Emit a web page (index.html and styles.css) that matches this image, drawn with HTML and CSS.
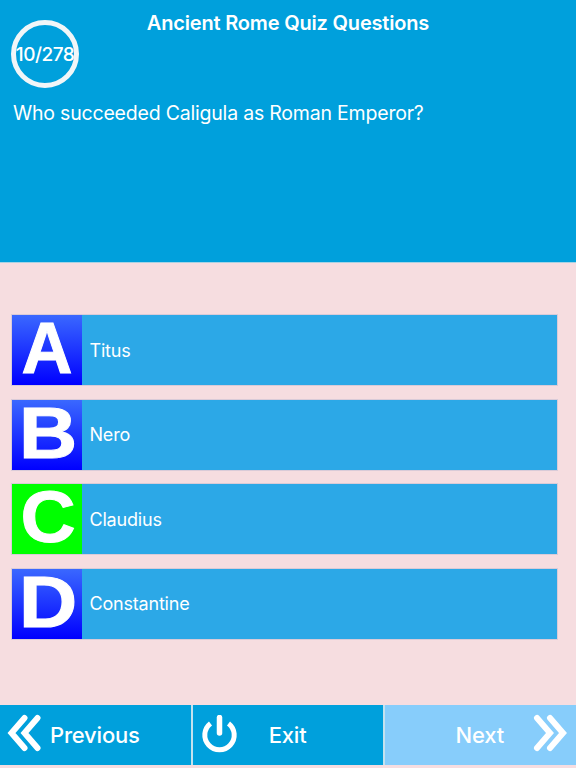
FILE: index.html
```html
<!DOCTYPE html>
<html lang="en">
<head>
<meta charset="utf-8">
<title>Ancient Rome Quiz Questions</title>
<link rel="stylesheet" href="styles.css">
</head>
<body>
<div class="app">
  <header class="top">
    <div class="top-grid">
      <h1 class="title">Ancient Rome Quiz Questions</h1>
      <div class="counter">10/278</div>
    </div>
    <p class="question">Who succeeded Caligula as Roman Emperor?</p>
  </header>
  <main class="answers">
    <div class="answer"><span class="letter"><span class="glyph glyph-a">A</span></span><span class="text">Titus</span></div>
    <div class="answer"><span class="letter"><span class="glyph glyph-b">B</span></span><span class="text">Nero</span></div>
    <div class="answer"><span class="letter correct"><span class="glyph glyph-c">C</span></span><span class="text">Claudius</span></div>
    <div class="answer"><span class="letter"><span class="glyph glyph-d">D</span></span><span class="text">Constantine</span></div>
  </main>
  <nav class="nav">
    <div class="btn btn-prev">
      <svg class="icon-chev" viewBox="0 0 40 40" aria-hidden="true"><path d="M19.5 5 6.5 20l13 15M32.5 5 19.5 20l13 15"/></svg>
      <span class="btn-label">Previous</span>
    </div>
    <div class="btn btn-exit">
      <svg class="icon-power" viewBox="0 0 37 40" aria-hidden="true"><path class="arc" d="M9.5 8.4A14.7 14.7 0 1 0 27.5 8.4"/><path class="bar" d="M18.5 2.5V18"/></svg>
      <span class="btn-label">Exit</span>
    </div>
    <div class="btn btn-next">
      <span class="btn-label">Next</span>
      <svg class="icon-chev" viewBox="0 0 40 40" aria-hidden="true"><path d="M6 5l13 15L6 35M19 5l13 15-13 15"/></svg>
    </div>
  </nav>
</div>
</body>
</html>
```
FILE: styles.css
```css
* { box-sizing: border-box; }
html, body { margin: 0; padding: 0; }
body { font-family: Inter, "Liberation Sans", sans-serif; color: #fff; background: #f6dde0; }
.app { width: 576px; height: 768px; display: flex; flex-direction: column; overflow: hidden; }

.top { height: 263px; background: #00a0dc; border-bottom: 1px solid #a9d3e4; padding: 11px 13px 0 11px; }
.top-grid { display: grid; }
.title, .counter { grid-area: 1 / 1; }
.title { margin: 0 0 0 -11px; width: 576px; text-align: center; font-size: 20px; line-height: 24px; font-weight: 600; letter-spacing: -0.18px; }
.counter { margin-top: 9px; width: 68px; height: 68px; border: 5px solid #f1f6f8; border-radius: 50%; display: flex; align-items: center; justify-content: center; font-size: 19px; font-weight: 500; letter-spacing: -0.5px; white-space: nowrap; }
.question { margin: 13px 0 0 2px; font-size: 19.5px; line-height: 24px; letter-spacing: -0.2px; }

.answers { flex: 1; display: flex; flex-direction: column; gap: 14.5px; padding: 52px 19px 0 12px; }
.answer { height: 70px; display: flex; align-items: center; background: #2ca8e7; box-shadow: 0 0 0 1px #d9cbd8; }
.letter { width: 70px; height: 70px; flex: none; padding-bottom: 4px; display: flex; align-items: center; justify-content: center; background: linear-gradient(#3a68ff, #0000ff); }
.letter.correct { background: #00ff00; }
.glyph { font-family: "Liberation Sans", Arial, sans-serif; font-weight: 700; font-size: 72px; line-height: 1; -webkit-text-stroke: 1px #fff; }
.glyph-a { transform: scaleX(0.98); }
.glyph-b { transform: translateX(1px) scaleX(1.12); }
.glyph-c { transform: translateX(1px) scaleX(1.06); }
.glyph-d { transform: translateX(1px) scaleX(1.12); }
.text { margin-left: 7.5px; font-size: 18px; letter-spacing: -0.2px; }

.nav { height: 60px; margin-bottom: 3px; display: flex; gap: 2px; flex: none; background: #c4e2ee; }
.btn { flex: 1; display: flex; align-items: center; background: #00a0dc; font-size: 22px; font-weight: 500; }
.btn-next { background: #87cdfb; justify-content: flex-end; }
.btn-label { letter-spacing: -0.2px; }
.icon-chev { width: 40px; height: 40px; flex: none; margin-bottom: 4px; fill: none; stroke: #fff; stroke-width: 6; stroke-linecap: round; stroke-linejoin: miter; }
.icon-power { width: 37px; height: 40px; flex: none; fill: none; stroke: #fff; stroke-width: 5; }
.icon-power .bar { stroke-width: 5.5; stroke-linecap: round; }
.btn-prev .icon-chev { margin-left: 5px; }
.btn-prev .btn-label { margin-left: 5px; }
.btn-exit .icon-power { margin-left: 8px; }
.btn-exit .btn-label { margin-left: 31px; }
.btn-next .btn-label { margin-right: 27px; }
.btn-next .icon-chev { margin-right: 5px; }
```
